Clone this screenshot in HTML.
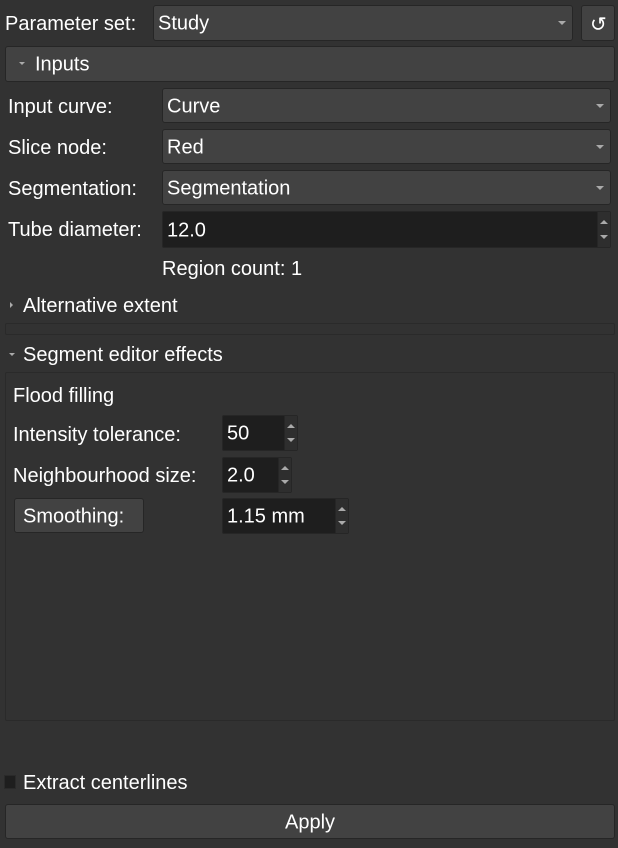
<!DOCTYPE html>
<html><head><style>
*{box-sizing:border-box;margin:0;padding:0}
body{width:618px;height:848px;background:#323232;color:#fff;font-family:"Liberation Sans",sans-serif;font-size:20px;position:relative;overflow:hidden}
.a{position:absolute}
.t{position:absolute;white-space:nowrap;line-height:24px}
.cb{position:absolute;background:#424242;border:1px solid #262626;border-radius:3px}
.cb span{position:absolute;left:4px;top:50%;transform:translateY(-45%);white-space:nowrap}
.arr{position:absolute;right:6px;top:50%;margin-top:-2px;width:0;height:0;border-left:4px solid transparent;border-right:4px solid transparent;border-top:4px solid #aaa}
.sp{position:absolute;background:#1e1e1e;border:1px solid #262626;border-radius:2px}
.sp span{position:absolute;left:4px;top:50%;transform:translateY(-45%);white-space:nowrap}
.sb{position:absolute;right:0;top:0;bottom:0;width:13px;background:#2e2e2e;border-left:1px solid #262626}
.sb:before{content:"";position:absolute;left:2px;top:8px;border-left:4px solid transparent;border-right:4px solid transparent;border-bottom:4px solid #aaa}
.sb:after{content:"";position:absolute;left:2px;bottom:8px;border-left:4px solid transparent;border-right:4px solid transparent;border-top:4px solid #aaa}
.tri{position:absolute;width:0;height:0}
</style></head><body>
<div class="t" style="left:5px;top:12px">Parameter set:</div>
<div class="cb" style="left:153px;top:5px;width:420px;height:36px"><span>Study</span><div class="arr"></div></div>
<div class="cb" style="left:581px;top:5px;width:34px;height:36px"><span style="left:8px;font-size:20px">↺</span></div>
<div class="cb" style="left:5px;top:46px;width:610px;height:36px"><div class="tri" style="left:13px;top:15px;border-left:3px solid transparent;border-right:3px solid transparent;border-top:3px solid #aaa"></div><span style="left:29px">Inputs</span></div>
<div class="t" style="left:8px;top:95px">Input curve:</div>
<div class="cb" style="left:162px;top:88px;width:449px;height:35px"><span>Curve</span><div class="arr"></div></div>
<div class="t" style="left:8px;top:136px">Slice node:</div>
<div class="cb" style="left:162px;top:129px;width:449px;height:35px"><span>Red</span><div class="arr"></div></div>
<div class="t" style="left:8px;top:177px">Segmentation:</div>
<div class="cb" style="left:162px;top:170px;width:449px;height:35px"><span>Segmentation</span><div class="arr"></div></div>
<div class="t" style="left:8px;top:218px">Tube diameter:</div>
<div class="sp" style="left:162px;top:211px;width:449px;height:37px"><span>12.0</span><div class="sb"></div></div>
<div class="t" style="left:162px;top:257px">Region count: 1</div>
<div class="tri" style="left:10px;top:302px;border-top:3px solid transparent;border-bottom:3px solid transparent;border-left:3px solid #aaa"></div>
<div class="t" style="left:23px;top:294px">Alternative extent</div>
<div class="a" style="left:5px;top:323px;width:610px;height:12px;border:1px solid #2a2a2a;border-radius:2px"></div>
<div class="tri" style="left:9px;top:353px;border-left:3px solid transparent;border-right:3px solid transparent;border-top:3px solid #aaa"></div>
<div class="t" style="left:23px;top:343px">Segment editor effects</div>
<div class="a" style="left:5px;top:372px;width:610px;height:349px;border:1px solid #2a2a2a;border-radius:2px"></div>
<div class="t" style="left:13px;top:384px">Flood filling</div>
<div class="t" style="left:13px;top:423px">Intensity tolerance:</div>
<div class="sp" style="left:222px;top:415px;width:76px;height:36px"><span>50</span><div class="sb"></div></div>
<div class="t" style="left:13px;top:464px">Neighbourhood size:</div>
<div class="sp" style="left:222px;top:457px;width:70px;height:36px"><span>2.0</span><div class="sb"></div></div>
<div class="cb" style="left:14px;top:498px;width:130px;height:35px"><span style="left:8px">Smoothing:</span></div>
<div class="sp" style="left:222px;top:498px;width:127px;height:36px"><span>1.15 mm</span><div class="sb"></div></div>
<div class="a" style="left:4px;top:775px;width:12px;height:14px;background:#1e1e1e;border:1px solid #2a2a2a"></div>
<div class="t" style="left:23px;top:771px">Extract centerlines</div>
<div class="cb" style="left:5px;top:804px;width:610px;height:35px"><span style="left:0;right:0;text-align:center">Apply</span></div>
</body></html>
